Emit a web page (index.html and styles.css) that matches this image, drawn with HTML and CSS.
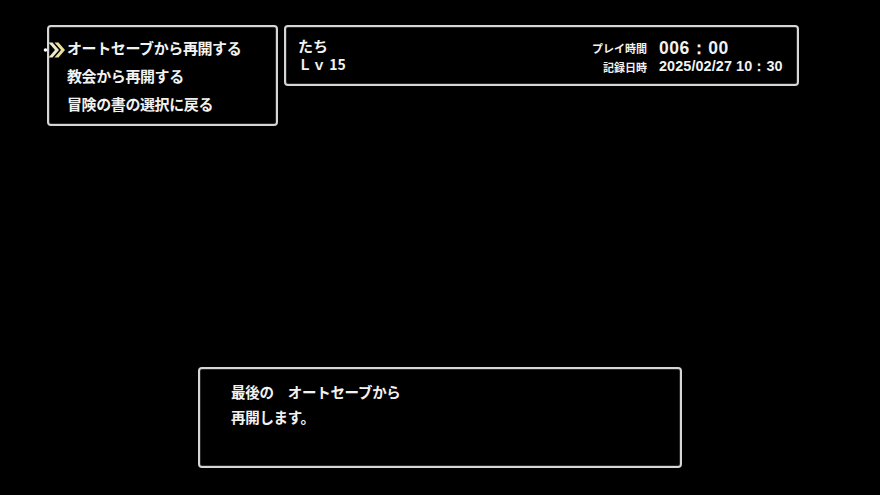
FILE: index.html
```
<!DOCTYPE html>
<html lang="ja">
<head>
<meta charset="utf-8">
<link rel="stylesheet" href="styles.css">
</head>
<body>
<div class="screen">
  <div class="top">
    <div class="win menu">
      <svg class="cursor" width="24" height="18" viewBox="0 0 24 18">
        <circle cx="2.5" cy="9" r="1.8" fill="#ffffff"/>
        <path d="M5.5 1.5 L12 9 L5.5 16.5 L9.5 16.5 L16 9 L9.5 1.5 Z" fill="#eeeacc"/>
        <path d="M11.5 1.5 L18 9 L11.5 16.5 L15.5 16.5 L22 9 L15.5 1.5 Z" fill="#e9df98"/>
      </svg>
      <div class="item">オートセーブから再開する</div>
      <div class="item">教会から再開する</div>
      <div class="item">冒険の書の選択に戻る</div>
    </div>
    <div class="win info">
      <div class="who">
        <div class="name">たち</div>
        <div class="lv">Ｌｖ 15</div>
      </div>
      <div class="times">
        <div class="trow"><span class="lbl">プレイ時間</span><span class="val big">006：00</span></div>
        <div class="trow"><span class="lbl">記録日時</span><span class="val">2025/02/27 10：30</span></div>
      </div>
    </div>
  </div>
  <div class="win msg">
    <div class="line">最後の　オートセーブから</div>
    <div class="line">再開します。</div>
  </div>
</div>
</body>
</html>
```
FILE: styles.css
```
html, body {
  margin: 0;
  padding: 0;
  background: #000;
}
.screen {
  width: 880px;
  height: 495px;
  background: #000;
  color: #f2f2f2;
  font-family: "Noto Sans CJK JP", "Noto Sans", sans-serif;
  font-weight: 700;
  overflow: hidden;
  padding-top: 25px;
  box-sizing: border-box;
}
.top {
  display: flex;
  align-items: flex-start;
  gap: 6px;
  padding-left: 47px;
}
.win {
  border: 2px solid #d6d6d6;
  border-radius: 4px;
  box-shadow: inset 0 0 0 1px #2a2a2a;
  box-sizing: border-box;
  background: #000;
}
.menu {
  position: relative;
  width: 231px;
  height: 101px;
  padding: 7px 0 0 18px;
  font-size: 15px;
  line-height: 28px;
  letter-spacing: -0.4px;
}
.cursor {
  position: absolute;
  left: -6px;
  top: 14px;
}
.info {
  width: 515px;
  height: 61px;
  display: flex;
  justify-content: space-between;
  padding: 9px 14px 0 12px;
}
.who {
  font-size: 15px;
  line-height: 19px;
}
.lv {
  font-size: 14px;
  letter-spacing: 0;
}
.times {
  display: flex;
  flex-direction: column;
  padding-top: 2px;
}
.trow {
  display: flex;
  align-items: center;
  height: 19px;
}
.lbl {
  width: 160px;
  text-align: right;
  font-size: 11px;
  padding-right: 12px;
  box-sizing: border-box;
  font-weight: 700;
}
.val {
  width: 124px;
  font-family: "Liberation Sans", "Noto Sans", sans-serif;
  font-weight: 700;
  font-size: 14.4px;
  letter-spacing: 0.1px;
  white-space: nowrap;
}
.val.big {
  font-size: 17.5px;
  letter-spacing: 0.5px;
}
.msg {
  width: 484px;
  height: 101px;
  margin: 241px 0 0 198px;
  padding: 10px 0 0 31px;
  font-size: 14.5px;
  line-height: 25px;
  letter-spacing: -0.3px;
}
```
